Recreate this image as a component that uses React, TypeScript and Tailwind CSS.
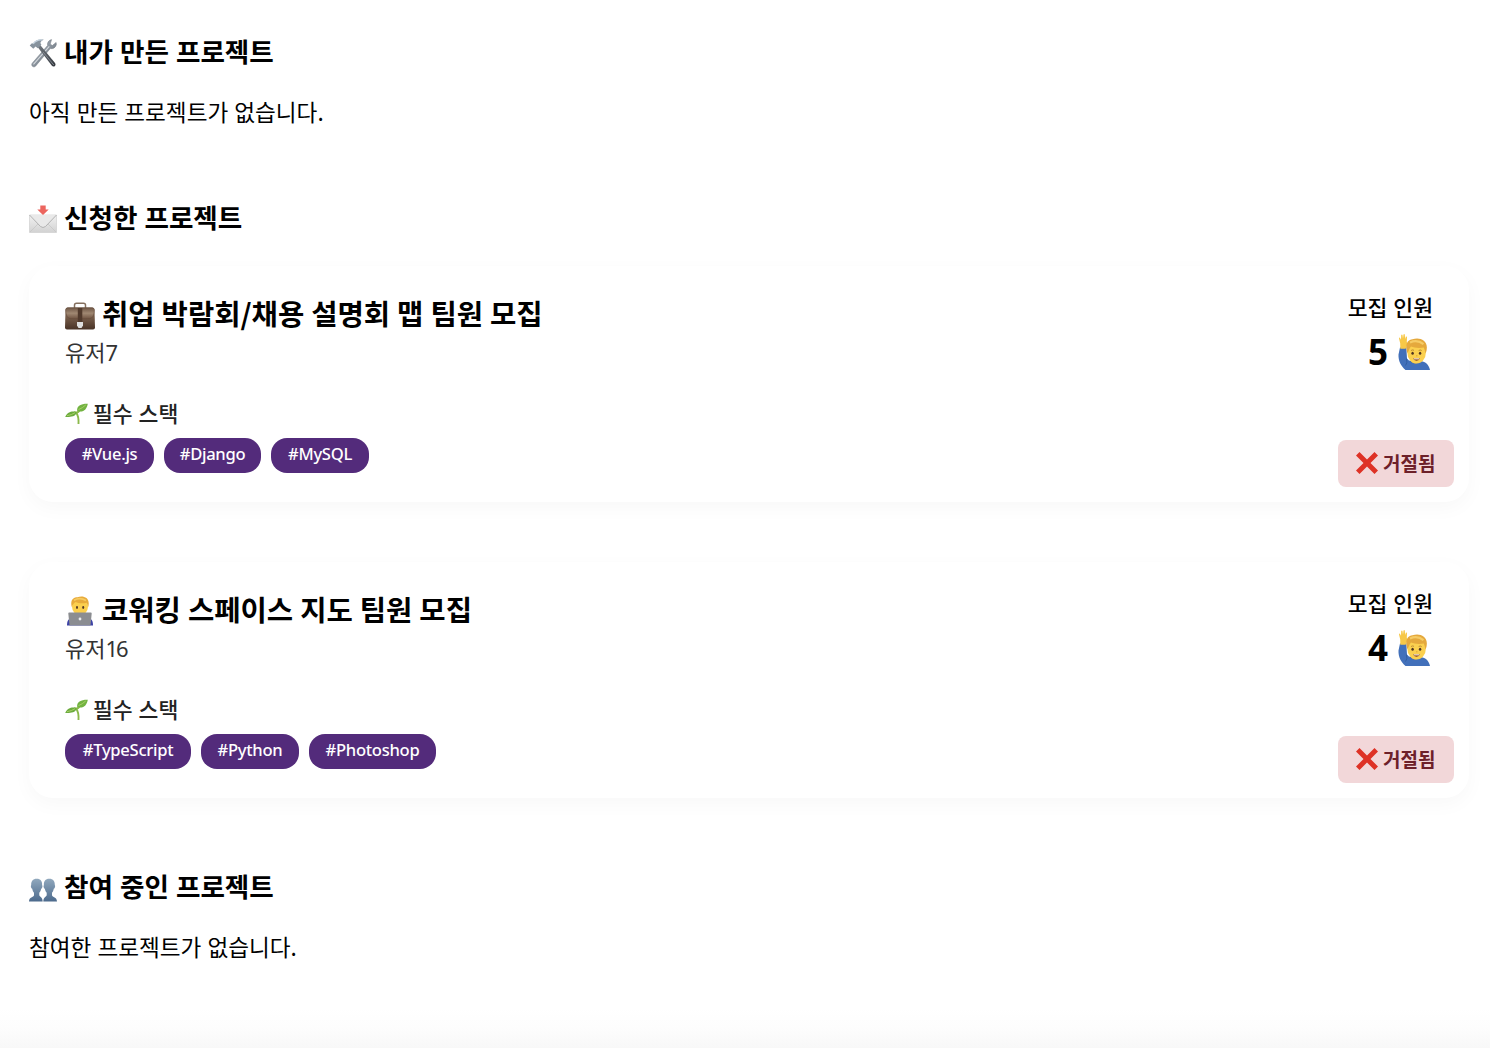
import React from 'react';

type IconProps = { className?: string };

function ToolsIcon({ className }: IconProps) {
  return (
    <svg viewBox="0 0 28 30" className={className} aria-hidden="true">
      <defs>
        <linearGradient id="steel" x1="0" y1="0" x2="1" y2="1">
          <stop offset="0" stopColor="#b3bbc4" />
          <stop offset=".5" stopColor="#8a939d" />
          <stop offset="1" stopColor="#59616a" />
        </linearGradient>
        <linearGradient id="handle" x1="0" y1="0" x2="1" y2="1">
          <stop offset="0" stopColor="#777d84" />
          <stop offset="1" stopColor="#30343a" />
        </linearGradient>
      </defs>
      <path d="M22.6 1.6c-2.6.4-4.6 3-4 5.9L3.2 25.2c-.8 1.1-.5 2.500.4 3.200 1 .8 2.400.5 3.100-.4L21.2 10.600c2.800.6 5.600-1 6.200-4.200l-.3-2-3.800 3.200-2.100-1.600Z" fill="url(#steel)" stroke="#737b83" strokeWidth=".5" />
      <path d="m4.500 26.400 15.800-18" stroke="#d5d9dd" strokeWidth="1.100" />
      <path d="m8.600 9 2.400-2.300 15 18.200c.9 1.200.6 2.500-.3 3.300-1 .7-2.100.4-3-.6Z" fill="url(#handle)" />
      <path d="m14 14 10.800 13" stroke="#8e969f" strokeWidth=".8" />
      <path d="M4 5.500C6.500 2.200 10.100.9 14.900 1.800c-1.800.7-3.300 1.800-3.500 3.200l1 1.800-3.700 3.400-2.100-1.800-2.300 2.400L.7 7.400l2.200-2.200Z" fill="#87939e" />
      <path d="M4.200 5.800C7 2.500 9.700 1.600 13 2" stroke="#c5d3df" strokeWidth="1.300" fill="none" />
    </svg>
  );
}

function MailIcon({ className }: IconProps) {
  return (
    <svg viewBox="0 0 28 28" className={className} aria-hidden="true">
      <defs>
        <linearGradient id="paper" x2="0" y2="1">
          <stop stopColor="#f2f2f2" />
          <stop offset="1" stopColor="#d2d2d2" />
        </linearGradient>
      </defs>
      <path d="M.5 10h27v17.500H.5Z" fill="url(#paper)" stroke="#cbcbcb" strokeWidth=".6" />
      <path d="m1 27 9-9m17 9-9-9" stroke="#c4c4c4" strokeWidth=".7" />
      <path d="m.5 10 11 11.500q2.500 2 5 0l11-11.500" fill="#e9e9e9" stroke="#b2b2b2" strokeWidth="1" />
      <path d="M11.300.5h5.400v4h3L14 10 8.300 4.500h3Z" fill="#ec655e" />
    </svg>
  );
}

function PeopleIcon({ className }: IconProps) {
  return (
    <svg viewBox="0 0 28 24" className={className} aria-hidden="true">
      <defs>
        <linearGradient id="people" x2="0" y2="1">
          <stop stopColor="#90a8bd" />
          <stop offset="1" stopColor="#4c6a8c" />
        </linearGradient>
      </defs>
      <path d="M7.700.8C3.800.8 2 3.400 2.200 7c-.8.9-.1 3.500 1 3.800.4 1.800 1 3.200 1.800 4v2.500C4.500 19.300.2 18.900 0 23.500h13.700c-.1-4.600-3-4.600-3.400-6.200v-2.500c.8-.8 1.500-2.200 1.900-4 1.100-.3 1.700-2.900.9-3.800C13.400 3.400 11.600.8 7.700.8Z" fill="url(#people)" />
      <path d="M20.300.8c3.900 0 5.700 2.600 5.500 6.200.8.900.1 3.500-1 3.800-.4 1.800-1 3.200-1.800 4v2.500c.5 2 4.800 1.600 5 6.200H14.300c.1-4.600 3-4.600 3.400-6.200v-2.500c-.8-.8-1.500-2.200-1.900-4-1.100-.3-1.700-2.900-.9-3.800C14.600 3.400 16.400.8 20.300.8Z" fill="url(#people)" />
    </svg>
  );
}

function BriefcaseIcon({ className }: IconProps) {
  return (
    <svg viewBox="0 0 30 28" className={className} aria-hidden="true">
      <defs>
        <linearGradient id="leather" x2="0" y2="1">
          <stop stopColor="#8b7360" />
          <stop offset=".45" stopColor="#765c49" />
          <stop offset="1" stopColor="#493327" />
        </linearGradient>
        <linearGradient id="flap" x2="0" y2="1">
          <stop stopColor="#6f5645" />
          <stop offset=".5" stopColor="#a08872" />
          <stop offset="1" stopColor="#705442" />
        </linearGradient>
      </defs>
      <path d="M9.500 6V3.300q0-2 2-2h7q2 0 2 2V6" stroke="#85705f" strokeWidth="1.500" fill="none" />
      <path d="M2.500 5.500h25q1.800 0 2 2.500l.5 17.500q0 2-2 2H2q-2 0-2-2L.5 8q.2-2.500 2-2.500Z" fill="url(#leather)" />
      <path d="M.6 7.500q.2 6.500 2.900 8.500 1.200.8 4.500.8h14q3.300 0 4.500-.8 2.700-2 2.900-8.500-.5-1.800-2-1.800H2.600q-1.500 0-2 1.800Z" fill="url(#flap)" stroke="#5a4233" strokeWidth=".4" />
      <path d="M12.800 6h4.500v14h-4.500Z" fill="#513a2c" />
      <path d="M12 20h6v3.500l-1.500 2.500h-3L12 23.500Z" fill="#dedede" />
    </svg>
  );
}

function CoderIcon({ className }: IconProps) {
  return (
    <svg viewBox="0 0 26 30" className={className} aria-hidden="true">
      <path d="M0 29.500c0-4.500 1.200-6.500 4-7.500h18c2.800 1 4 3 4 7.500Z" fill="#3d43a6" />
      <ellipse cx="13" cy="10.500" rx="8" ry="8.700" fill="#fbcf4d" />
      <path d="M4.700 11C3 3.800 6.500 1.300 10.500 1.300 15-.8 23.800.5 21.300 11c-.6-1-.8-2.800-1.500-4.300-4 .9-8.500.6-11.200-.7-2 1.300-3 3-3.900 5Z" fill="#e8ab3a" />
      <path d="M7 4.200q6-3.200 12 .3" stroke="#f6cb62" strokeWidth="1.700" fill="none" />
      <ellipse cx="10" cy="11.500" rx="1" ry="1.400" fill="#513725" />
      <ellipse cx="16.200" cy="11.500" rx="1" ry="1.400" fill="#513725" />
      <path d="M2.200 16.500h21.600q1 0 .9 1l-1.200 12H2.500l-1.200-12q-.1-1 .9-1Z" fill="#8b8d91" />
      <circle cx="13" cy="23" r="1.400" fill="#e9eaed" />
    </svg>
  );
}

function SproutIcon({ className }: IconProps) {
  return (
    <svg viewBox="0 0 23 22" className={className} aria-hidden="true">
      <path d="M13.500 21c.3-5-.5-9-2.500-11.600 1.300.2 2.700-.7 3.600-1.800" fill="none" stroke="#8bb94a" strokeWidth="1.900" />
      <path d="M11.800 9.600C9 7.400 2.500 8.100.2 14c3.100.1 10.300.5 11.600-4.400Z" fill="#6bab3d" />
      <path d="M12.200 8C11.300 2.500 16.500.5 22.800.7 21.600 6.500 18.500 9.800 12.200 8Z" fill="#72b341" />
      <path d="M2 12.700q4.500-.7 8-3M13.500 6.600q4-1.500 7.300-4.700" fill="none" stroke="#a7ce67" strokeWidth="1" />
    </svg>
  );
}

function RaisedHandIcon({ className }: IconProps) {
  return (
    <svg viewBox="0 0 32 36" className={className} aria-hidden="true">
      <path d="M2 13.500 8.300 13 9 24.500q2 3.500 7 2.300l6.800.2c5 .8 8 3.700 9.200 9H7.500C3 32 .2 27 .5 20.500Z" fill="#4270ba" />
      <path d="M8.500 24.500q1.200 5-1 7" fill="none" stroke="#2f5a9c" strokeWidth=".8" />
      <path d="M13 25h8.500v2.500q-4.500 4-8.500 0Z" fill="#e9ac35" />
      <path d="M2.300 14.800 2.200 9.300 1 4.600q0-1 .8-1l1.200 2.200L3.200.9q.8-1 1.300 0l.5 3.700L5.500.4q.9-.7 1.300.1L7.100 5l.8-2.400q1-.4 1.100.7l-.2 4.700q.8 1.200.5 2.500-.7 2.400-1.700 4.300Z" fill="#f7c848" />
      <ellipse cx="18.600" cy="18.500" rx="9.300" ry="11" fill="#fbd04f" />
      <path d="M9.300 19C6.800 11 9 5.800 14.500 5.300c7-2.600 17.800.8 13.300 14-1-1.700-.9-3.500-2-5.800-4.500.9-9.500.4-12.800-.9-2 1.900-1.900 4.700-3.700 6.400Z" fill="#e5a93d" />
      <path d="M12 8.600q7.200-3.400 13.500 1.600" fill="none" stroke="#f6cc66" strokeWidth="2.200" />
      <path d="M13 16.500q1.500-1 3-.2m4.700.2q1.500-1 3 0" fill="none" stroke="#a3712a" strokeWidth=".7" />
      <ellipse cx="14.600" cy="19.200" rx="1.200" ry="1.500" fill="#503522" />
      <ellipse cx="22.100" cy="19.200" rx="1.200" ry="1.500" fill="#503522" />
      <path d="M18 21.800h1.500" fill="none" stroke="#dc9a2d" strokeWidth=".8" />
      <path d="M15 24.200h7q-.9 2.700-3.500 2.700T15 24.200Z" fill="#9a5b2b" />
      <path d="M15.800 24.400h5.400v.9h-5.400Z" fill="#fff" />
    </svg>
  );
}

function CrossIcon({ className }: IconProps) {
  return (
    <svg viewBox="0 0 22 22" className={className} aria-hidden="true">
      <path d="M3.500 0 11 7.500 18.500 0 22 3.500 14.500 11l7.500 7.500-3.500 3.500-7.500-7.500L3.500 22 0 18.500 7.500 11 0 3.500Z" fill="#de3226" />
    </svg>
  );
}

type Project = {
  title: string;
  owner: string;
  ownerNumber: number;
  capacity: number;
  stack: { name: string; width: string }[];
  icon: React.ReactNode;
};

const projects: Project[] = [
  {
    title: '취업 박람회/채용 설명회 맵 팀원 모집',
    owner: '유저',
    ownerNumber: 7,
    capacity: 5,
    stack: [
      { name: 'Vue.js', width: 'w-[89px]' },
      { name: 'Django', width: 'w-[97px]' },
      { name: 'MySQL', width: 'w-[98px]' },
    ],
    icon: <BriefcaseIcon className="mt-1 h-7 w-[30px]" />,
  },
  {
    title: '코워킹 스페이스 지도 팀원 모집',
    owner: '유저',
    ownerNumber: 16,
    capacity: 4,
    stack: [
      { name: 'TypeScript', width: 'w-[126px]' },
      { name: 'Python', width: 'w-[98px]' },
      { name: 'Photoshop', width: 'w-[127px]' },
    ],
    icon: <CoderIcon className="mt-[2px] ml-[2px] h-[30px] w-[26px]" />,
  },
];

function SectionTitle({ icon, children }: { icon: React.ReactNode; children: React.ReactNode }) {
  return (
    <h2 className="flex h-10 items-center text-[26.600px] leading-10 font-bold whitespace-nowrap">
      <span className="flex w-[35px] shrink-0">{icon}</span>
      <span className="pb-[2px] [word-spacing:1px]">{children}</span>
    </h2>
  );
}

function ProjectCard({ project }: { project: Project }) {
  return (
    <article className="flex h-[236px] justify-between rounded-[24px] bg-white shadow-[0_6px_20px_rgba(0,0,0,0.03)]">
      <div className="pt-7 pl-9">
        <h3 className="flex h-10 items-center text-[28.600px] leading-10 font-bold whitespace-nowrap">
          <span className="flex w-[37px] shrink-0">{project.icon}</span>
          <span className="pb-[2px] [word-spacing:0.500px]">{project.title}</span>
        </h3>
        <p className="h-10 text-[22px] leading-[35px] text-[#333]">
          {project.owner}
          <span className="font-['Noto_Sans'] tracking-[-2px]">{project.ownerNumber}</span>
        </p>
        <div className="mt-5 flex h-10 items-center text-[21.600px] leading-10 font-medium text-[#222]">
          <SproutIcon className="mr-[5px] h-[22px] w-[23px]" />
          <span className="pb-[3px] [word-spacing:1px]">필수 스택</span>
        </div>
        <ul className="mt-1 flex gap-[10px]">
          {project.stack.map((tag) => (
            <li
              key={tag.name}
              className={`h-[35px] rounded-[16px] bg-[#532b7b] text-center font-['Noto_Sans'] text-[16.600px] leading-8 font-medium tracking-[-0.300px] text-white ${tag.width}`}
            >
              #{tag.name}
            </li>
          ))}
        </ul>
      </div>
      <div className="flex flex-col items-end justify-between pt-6 pr-[15px] pb-[15px]">
        <div className="flex flex-col items-end pr-[21px]">
          <p className="h-9 text-[21.600px] leading-[33px] font-medium [word-spacing:1px]">모집 인원</p>
          <p className="flex h-[52px] items-center pr-[3px] font-['Noto_Sans'] text-[35px] font-bold">
            <span>{project.capacity}</span>
            <RaisedHandIcon className="ml-[10px] h-9 w-8" />
          </p>
        </div>
        <div className="flex h-[47px] w-[116px] items-center rounded-lg bg-[#f2d7d9] pl-[18px] text-[19px] font-bold text-[#6d2029]">
          <CrossIcon className="mr-[5px] mb-px h-[22px] w-[22px]" />
          <span>거절됨</span>
        </div>
      </div>
    </article>
  );
}

export default function App() {
  return (
    <main className="flex h-[1048px] w-[1490px] flex-col overflow-hidden bg-white pt-8 font-['Noto_Sans_CJK_KR',sans-serif] text-black">
      <section className="pl-[29px]">
        <SectionTitle icon={<ToolsIcon className="mt-[2px] h-[30px] w-7" />}>내가 만든 프로젝트</SectionTitle>
        <p className="mt-5 mb-px text-[22.600px] leading-10 [word-spacing:1px]">아직 만든 프로젝트가 없습니다.</p>
      </section>
      <section className="mt-[65px] pr-[21px] pl-[29px]">
        <SectionTitle icon={<MailIcon className="mt-[2px] h-7 w-7" />}>신청한 프로젝트</SectionTitle>
        <div className="mt-7 flex flex-col gap-[60px]">
          {projects.map((project) => (
            <ProjectCard key={project.title} project={project} />
          ))}
        </div>
      </section>
      <section className="mt-[69px] pl-[29px]">
        <SectionTitle icon={<PeopleIcon className="mt-[5px] h-6 w-7" />}>참여 중인 프로젝트</SectionTitle>
        <p className="mt-5 text-[22.600px] leading-10 [word-spacing:1px]">참여한 프로젝트가 없습니다.</p>
      </section>
      <div className="mt-auto h-10 bg-linear-to-b from-white via-[#fdfdfd] to-[#f8f8f8]" />
    </main>
  );
}
